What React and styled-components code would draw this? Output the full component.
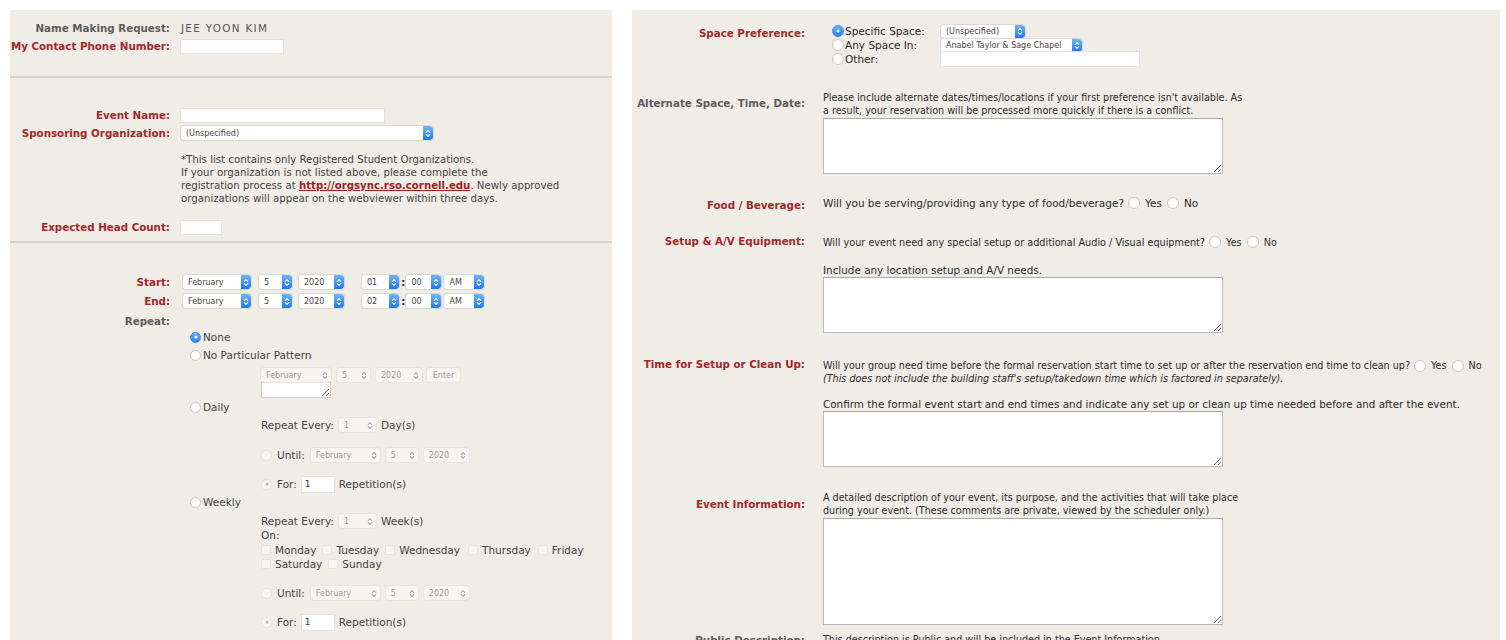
import React from 'react';
import styled, { createGlobalStyle } from 'styled-components';

const GlobalStyle = createGlobalStyle`
  html, body {
    margin: 0;
    padding: 0;
    background: #fff;
  }
  body {
    font-family: "DejaVu Sans", Verdana, sans-serif;
    color: #333;
  }
`;

const Page = styled.div`
  display: flex;
  align-items: flex-start;
  gap: 20px;
  padding: 10px 0 0 10px;
  height: 640px;
  box-sizing: border-box;
  overflow: hidden;
`;

const Panel = styled.div`
  flex: none;
  width: ${(p) => p.$w}px;
  height: 630px;
  background: #efede6;
  overflow: hidden;
`;

const Section = styled.div`
  padding-top: ${(p) => p.$pt || 0}px;
  padding-bottom: ${(p) => p.$pb || 0}px;
`;

const Divider = styled.div`
  height: 2px;
  background: #d4d2cc;
`;

const Row = styled.div`
  display: grid;
  grid-template-columns: 160px 1fr;
  column-gap: 11px;
  align-items: center;
  min-height: ${(p) => p.$h || 18}px;
  margin-top: ${(p) => p.$mt || 0}px;
`;

const Label = styled.div`
  text-align: right;
  font-weight: bold;
  font-size: 10.3px;
  line-height: 14px;
  white-space: nowrap;
  color: ${(p) => (p.$tone === 'gray' ? '#5d5d5d' : '#a2282a')};
  margin-top: ${(p) => p.$lt || 0}px;
`;

const Value = styled.div`
  font-size: 10.4px;
  letter-spacing: 1.3px;
  color: #555;
`;

const TextInput = styled.input`
  box-sizing: border-box;
  width: ${(p) => p.$w}px;
  height: ${(p) => p.$h || 14}px;
  margin: 0;
  padding: 0 3px;
  border: none;
  background: #fff;
  box-shadow: 0 0 0 1px #e4e2dc;
  font-family: inherit;
  font-size: 9px;
  color: #333;
  outline: none;
`;

const Note = styled.div`
  font-size: 10.2px;
  line-height: 13px;
  color: #444;
  white-space: nowrap;
  a {
    color: #a11d1d;
    font-weight: bold;
    text-decoration: underline;
  }
`;

const Controls = styled.div`
  display: flex;
  align-items: center;
  padding-left: ${(p) => p.$pl || 0}px;
`;

const SelectBox = styled.div`
  flex: none;
  display: flex;
  align-items: center;
  justify-content: space-between;
  box-sizing: border-box;
  width: ${(p) => p.$w}px;
  height: ${(p) => p.$h}px;
  margin-left: ${(p) => p.$ml || 0}px;
  padding-left: 5px;
  border-radius: 3px;
  background: ${(p) => (p.$disabled ? '#f6f5f1' : '#fff')};
  box-shadow: 0 0 0 1px ${(p) => (p.$disabled ? '#e7e5df' : '#dad8d2')},
    0 1px 1px rgba(0, 0, 0, ${(p) => (p.$disabled ? 0.02 : 0.08)});
  font-size: ${(p) => p.$fs || 8}px;
  color: ${(p) => (p.$disabled ? '#a09e9a' : '#444')};
  overflow: hidden;
`;

const Stepper = styled.span`
  flex: none;
  width: 10px;
  height: 100%;
  border-radius: 0 3px 3px 0;
  background: linear-gradient(#6eb5fb, #1f78ef);
  display: flex;
  align-items: center;
  justify-content: center;
`;

const MutedArrow = styled.span`
  flex: none;
  width: 12px;
  display: flex;
  align-items: center;
  justify-content: center;
`;

const Colon = styled.span`
  font-weight: bold;
  font-size: 11px;
  color: #333;
  margin: 0 1px 0 2px;
`;

const EnterButton = styled.span`
  flex: none;
  box-sizing: border-box;
  width: 33px;
  height: 14px;
  margin-left: 5px;
  border-radius: 3px;
  background: #f6f5f1;
  box-shadow: 0 0 0 1px #e7e5df;
  font-size: 8px;
  color: #a09e9a;
  display: flex;
  align-items: center;
  justify-content: center;
`;

const Radio = styled.span`
  flex: none;
  position: relative;
  box-sizing: border-box;
  width: ${(p) => p.$size || 11}px;
  height: ${(p) => p.$size || 11}px;
  border-radius: 50%;
  background: ${(p) =>
    p.$checked && !p.$muted ? 'linear-gradient(#6db3fb, #2a7ff0)' : p.$muted ? '#f7f6f3' : '#fff'};
  border: 1px solid
    ${(p) => (p.$checked && !p.$muted ? '#3b86ea' : p.$muted ? '#e4e2dc' : '#c9c7c2')};
  &::after {
    content: '';
    display: ${(p) => (p.$checked ? 'block' : 'none')};
    position: absolute;
    left: 50%;
    top: 50%;
    width: 3px;
    height: 3px;
    border-radius: 50%;
    background: ${(p) => (p.$muted ? '#b5b3ae' : '#fff')};
    transform: translate(-50%, -50%);
  }
`;

const Check = styled.span`
  flex: none;
  box-sizing: border-box;
  width: 10px;
  height: 10px;
  border-radius: 2px;
  background: #f6f5f1;
  border: 1px solid #e6e4de;
`;

const Options = styled.div`
  padding-left: 180px;
`;

const Option = styled.div`
  display: flex;
  align-items: center;
  gap: 2px;
  height: 18px;
  margin-top: ${(p) => p.$mt || 0}px;
  font-size: 10.5px;
  color: #444;
`;

const Sub = styled.div`
  padding-left: 71px;
`;

const Line = styled.div`
  display: flex;
  align-items: center;
  height: ${(p) => p.$h || 18}px;
  margin-top: ${(p) => p.$mt || 0}px;
  gap: ${(p) => p.$gap || 0}px;
  font-size: 10.5px;
  color: #444;
  white-space: nowrap;
`;

const Pair = styled.span`
  display: inline-flex;
  align-items: center;
  gap: 4px;
  margin-right: ${(p) => p.$mr || 0}px;
`;

const SmallArea = styled.textarea`
  display: block;
  box-sizing: border-box;
  width: 70px;
  height: 16px;
  margin: 0;
  padding: 0;
  border: 1px solid #cfcdc7;
  background: #fff;
  resize: both;
`;

/* right panel */

const RRow = styled.div`
  display: grid;
  grid-template-columns: 173px 1fr;
  column-gap: 18px;
  align-items: start;
  margin-top: ${(p) => p.$mt || 0}px;
`;

const RText = styled.div`
  font-size: ${(p) => p.$fs || 9.6}px;
  line-height: 13px;
  color: #2b2b2b;
  white-space: nowrap;
  margin-top: ${(p) => p.$mt || 0}px;
  em {
    font-style: italic;
  }
`;

const Inline = styled.div`
  display: flex;
  align-items: center;
  height: ${(p) => p.$h || 14}px;
  font-size: ${(p) => p.$fs || 9.6}px;
  color: #2b2b2b;
  white-space: nowrap;
`;

const Choice = styled.span`
  display: inline-flex;
  align-items: center;
  gap: 5px;
  margin-left: ${(p) => p.$ml || 4}px;
`;

const SpaceGrid = styled.div`
  display: grid;
  grid-template-columns: 108px auto;
  grid-auto-rows: 14px;
  align-items: center;
  padding-left: 10px;
`;

const SpaceOption = styled.div`
  display: flex;
  align-items: center;
  gap: 1px;
  margin-left: -1px;
  font-size: 10.5px;
  color: #2b2b2b;
  white-space: nowrap;
`;

const Area = styled.textarea`
  display: block;
  box-sizing: border-box;
  width: 400px;
  height: ${(p) => p.$h}px;
  margin: ${(p) => p.$mt || 0}px 0 0 0;
  padding: 2px;
  border: 1px solid #b9b9b9;
  border-top-color: #a9a9a9;
  background: #fff;
  resize: both;
  font-family: inherit;
`;

function Chevrons({ color }) {
  return (
    <svg width="6" height="9" viewBox="0 0 6 9" fill="none" stroke={color} strokeWidth="1.1" strokeLinecap="round" strokeLinejoin="round">
      <path d="M1.3 3.3 L3 1.6 L4.7 3.3" />
      <path d="M1.3 5.7 L3 7.4 L4.7 5.7" />
    </svg>
  );
}

function Select({ w, h = 14, fs, ml, disabled, children }) {
  return (
    <SelectBox $w={w} $h={h} $fs={fs} $ml={ml} $disabled={disabled}>
      <span>{children}</span>
      {disabled ? (
        <MutedArrow>
          <Chevrons color="#a9a7a2" />
        </MutedArrow>
      ) : (
        <Stepper>
          <Chevrons color="#fff" />
        </Stepper>
      )}
    </SelectBox>
  );
}

function DateTime({ hour }) {
  return (
    <Controls $pl={2}>
      <Select w={68}>February</Select>
      <Select w={33} ml={8}>5</Select>
      <Select w={45} ml={7}>2020</Select>
      <Select w={37} ml={18}>{hour}</Select>
      <Colon>:</Colon>
      <Select w={35}>00</Select>
      <Select w={40} ml={3}>AM</Select>
    </Controls>
  );
}

function UntilFor({ untilMt, forMt }) {
  return (
    <>
      <Line $mt={untilMt} $gap={5}>
        <Radio $muted $size={11} />
        <span>Until:</span>
        <Controls>
          <Select w={69} ml={1} disabled>February</Select>
          <Select w={32} ml={6} disabled>5</Select>
          <Select w={45} ml={6} disabled>2020</Select>
        </Controls>
      </Line>
      <Line $mt={forMt} $gap={5}>
        <Radio $muted $checked $size={11} />
        <span>For:</span>
        <TextInput $w={32} $h={15} defaultValue="1" readOnly />
        <span>Repetition(s)</span>
      </Line>
    </>
  );
}

function LeftPanel() {
  return (
    <Panel $w={602}>
      <Section $pt={9} $pb={21}>
        <Row>
          <Label $tone="gray">Name Making Request:</Label>
          <Value>JEE YOON KIM</Value>
        </Row>
        <Row>
          <Label>My Contact Phone Number:</Label>
          <TextInput $w={102} $h={13} readOnly />
        </Row>
      </Section>
      <Divider />
      <Section $pt={28} $pb={5}>
        <Row>
          <Label>Event Name:</Label>
          <TextInput $w={203} $h={13} readOnly />
        </Row>
        <Row>
          <Label>Sponsoring Organization:</Label>
          <Select w={252} h={14}>(Unspecified)</Select>
        </Row>
        <Row $mt={11}>
          <span />
          <Note>
            *This list contains only Registered Student Organizations.
            <br />
            If your organization is not listed above, please complete the
            <br />
            registration process at <a>http://orgsync.rso.cornell.edu</a>. Newly approved
            <br />
            organizations will appear on the webviewer within three days.
          </Note>
        </Row>
        <Row $mt={13}>
          <Label>Expected Head Count:</Label>
          <TextInput $w={40} $h={13} readOnly />
        </Row>
      </Section>
      <Divider />
      <Section $pt={30}>
        <Row>
          <Label>Start:</Label>
          <DateTime hour="01" />
        </Row>
        <Row $mt={1}>
          <Label>End:</Label>
          <DateTime hour="02" />
        </Row>
        <Row $mt={2}>
          <Label $tone="gray">Repeat:</Label>
          <span />
        </Row>
        <Options>
          <Option $mt={-2}>
            <Radio $checked />
            <span>None</span>
          </Option>
          <Option>
            <Radio />
            <span>No Particular Pattern</span>
          </Option>
          <Sub>
            <Line $h={14} $mt={4}>
              <Controls>
                <Select w={70} disabled>February</Select>
                <Select w={33} ml={6} disabled>5</Select>
                <Select w={46} ml={6} disabled>2020</Select>
                <EnterButton>Enter</EnterButton>
              </Controls>
            </Line>
            <SmallArea readOnly />
          </Sub>
          <Option>
            <Radio />
            <span>Daily</span>
          </Option>
          <Sub>
            <Line $gap={5}>
              <span>Repeat Every:</span>
              <Select w={37} disabled>1</Select>
              <span>Day(s)</span>
            </Line>
            <UntilFor untilMt={12} forMt={11} />
          </Sub>
          <Option>
            <Radio />
            <span>Weekly</span>
          </Option>
          <Sub>
            <Line $h={14} $mt={3} $gap={5}>
              <span>Repeat Every:</span>
              <Select w={37} disabled>1</Select>
              <span>Week(s)</span>
            </Line>
            <Line $h={14}>On:</Line>
            <Line $h={14} $mt={1}>
              <Pair $mr={6}><Check />Monday</Pair>
              <Pair $mr={6}><Check />Tuesday</Pair>
              <Pair $mr={8}><Check />Wednesday</Pair>
              <Pair $mr={7}><Check />Thursday</Pair>
              <Pair><Check />Friday</Pair>
            </Line>
            <Line $h={14}>
              <Pair $mr={6}><Check />Saturday</Pair>
              <Pair><Check />Sunday</Pair>
            </Line>
            <UntilFor untilMt={13} forMt={11} />
          </Sub>
        </Options>
      </Section>
    </Panel>
  );
}

function RightPanel() {
  return (
    <Panel $w={868}>
      <RRow $mt={14}>
        <Label $lt={2}>Space Preference:</Label>
        <SpaceGrid>
          <SpaceOption>
            <Radio $checked $size={12} />
            <span>Specific Space:</span>
          </SpaceOption>
          <Select w={84} h={13}>(Unspecified)</Select>
          <SpaceOption>
            <Radio $size={12} />
            <span>Any Space In:</span>
          </SpaceOption>
          <Select w={141} h={13}>Anabel Taylor &amp; Sage Chapel</Select>
          <SpaceOption>
            <Radio $size={12} />
            <span>Other:</span>
          </SpaceOption>
          <TextInput $w={198} $h={14} readOnly />
        </SpaceGrid>
      </RRow>

      <RRow $mt={25}>
        <Label $tone="gray" $lt={5}>Alternate Space, Time, Date:</Label>
        <div>
          <RText>
            Please include alternate dates/times/locations if your first preference isn't available. As
            <br />
            a result, your reservation will be processed more quickly if there is a conflict.
          </RText>
          <Area $h={56} $mt={1} readOnly />
        </div>
      </RRow>

      <RRow $mt={22}>
        <Label $lt={2}>Food / Beverage:</Label>
        <Inline $fs={10.5}>
          Will you be serving/providing any type of food/beverage?
          <Choice $ml={4}><Radio $size={12} />Yes</Choice>
          <Choice $ml={5}><Radio $size={12} />No</Choice>
        </Inline>
      </RRow>

      <RRow $mt={23}>
        <Label $lt={-1}>Setup &amp; A/V Equipment:</Label>
        <div>
          <Inline $fs={9.7}>
            Will your event need any special setup or additional Audio / Visual equipment?
            <Choice $ml={4}><Radio $size={12} />Yes</Choice>
            <Choice $ml={5}><Radio $size={12} />No</Choice>
          </Inline>
          <RText $fs={10.4} $mt={15}>Include any location setup and A/V needs.</RText>
          <Area $h={56} $mt={0} readOnly />
        </div>
      </RRow>

      <RRow $mt={26}>
        <Label $lt={-2}>Time for Setup or Clean Up:</Label>
        <div>
          <Inline $h={13}>
            Will your group need time before the formal reservation start time to set up or after the reservation end time to clean up?
            <Choice $ml={4}><Radio $size={12} />Yes</Choice>
            <Choice $ml={5}><Radio $size={12} />No</Choice>
          </Inline>
          <RText>
            <em>(This does not include the building staff's setup/takedown time which is factored in separately).</em>
          </RText>
          <RText $fs={10.4} $mt={13}>
            Confirm the formal event start and end times and indicate any set up or clean up time needed before and after the event.
          </RText>
          <Area $h={56} $mt={0} readOnly />
        </div>
      </RRow>

      <RRow $mt={24}>
        <Label $lt={6}>Event Information:</Label>
        <div>
          <RText>
            A detailed description of your event, its purpose, and the activities that will take place
            <br />
            during your event. (These comments are private, viewed by the scheduler only.)
          </RText>
          <Area $h={107} $mt={1} readOnly />
        </div>
      </RRow>

      <RRow $mt={8}>
        <Label $tone="gray">Public Description:</Label>
        <RText>This description is Public and will be included in the Event Information.</RText>
      </RRow>
    </Panel>
  );
}

export default function App() {
  return (
    <>
      <GlobalStyle />
      <Page>
        <LeftPanel />
        <RightPanel />
      </Page>
    </>
  );
}
